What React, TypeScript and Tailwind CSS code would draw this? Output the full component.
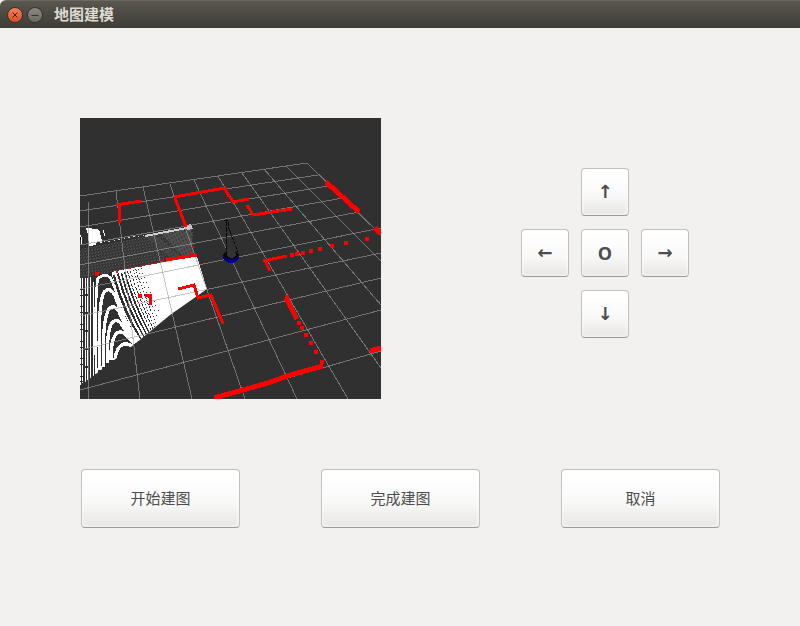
import type { ReactNode } from "react";

type Segment = [number, number, number, number];

const gridLines: Segment[] = [
  [0, 78, 227, 45],
  [0, 93, 238, 57],
  [0, 109, 248, 68],
  [0, 127, 263, 80],
  [0, 147, 279, 94],
  [0, 171, 301, 110],
  [0, 198, 301, 135],
  [0, 232, 301, 160],
  [0, 272, 301, 192],
  [135, 281, 301, 233],
  [8, 84, 8, 281],
  [36, 73, 60, 281],
  [63, 69, 112, 281],
  [90, 66, 165, 281],
  [114, 62, 217, 281],
  [138, 58, 268, 281],
  [162, 55, 301, 250],
  [184, 51, 301, 187],
  [206, 48, 301, 143],
  [227, 45, 301, 117],
];

const scanLines = [
  "M36 87 L61 83",
  "M39 87 L40 105",
  "M94 79 L145 70 L149 79",
  "M95 80 L106 109",
  "M150 79 L153 84 L169 81",
  "M167 87 L173 97 L212 91",
  "M183 143 L207 138",
  "M185 143 L190 153",
  "M98 171 L114 167 L118 180 L131 177 L143 206",
  "M65 177 L70 177 L70 187",
  "M86 142 L117 137",
];

const thickScanLines = [
  "M246 64 L279 94",
  "M295 110 L301 116",
  "M206 180 L217 201",
  "M134 280 L188 265 L210 257 L243 248",
  "M290 233 L301 230",
];

const scanPoints: [number, number][] = [
  [287, 121], [266, 125], [252, 128], [240, 131], [231, 133], [223, 135], [217, 136], [212, 137],
  [219, 205], [222, 210], [226, 217], [231, 225], [236, 234], [242, 244],
  [207, 179], [17, 156], [60, 178],
];

const wallPoints: [number, number][] = [
  [37, 154], [50, 150], [61, 148], [69, 146], [76, 145], [82, 143], [113, 129], [111, 134],
];

const arches = [
  "M49 476 C46 380 45 260 53 190 Q76 172 92 190 C118 245 142 325 184 380",
  "M60 464 C55 380 56 255 73 230 Q90 214 105 242 C125 295 150 350 174 378",
  "M71 455 C67 380 72 300 88 280 Q103 267 117 290 C135 330 155 362 172 382",
  "M83 444 C80 390 84 332 99 320 Q115 309 130 335 Q148 366 166 384",
  "M93 434 C91 395 99 362 113 353 Q130 345 145 368 L162 386",
  "M104 436 Q109 398 128 388 Q144 383 158 395",
];

const fanSolid = [
  "M98 180 L104 179 Q132 280 187 376 L184 378 Q124 290 98 180Z",
  "M111 176 L116 175 Q142 272 196 369 L193 371 Q135 278 111 176Z",
  "M122 174 L126 173 Q150 264 204 362 L201 364 Q145 270 122 174Z",
  "M132 171 L136 170 Q160 256 211 356 L208 358 Q155 262 132 171Z",
];

const fanDashed = [
  "M143 169 Q166 255 217 352",
  "M151 167 Q175 248 222 347",
  "M159 165 Q183 243 226 340",
  "M167 163 Q190 236 231 330",
  "M175 161 Q197 228 234 315",
  "M183 160 Q203 220 236 290",
];

function PointCloudView() {
  return (
    <svg
      role="img"
      aria-label="地图"
      viewBox="0 0 301 281"
      className="block w-[301px] shrink-0 bg-[#303030]"
      shapeRendering="crispEdges"
    >
      <defs>
        <pattern id="mesh" width="3" height="3" patternUnits="userSpaceOnUse" patternTransform="rotate(-10)">
          <rect width="1" height="1" fill="#666" />
          <rect x="1" y="2" width="1" height="1" fill="#505050" />
        </pattern>
        <pattern id="grain" width="3" height="4" patternUnits="userSpaceOnUse" patternTransform="rotate(-28)">
          <rect width="1" height="2" fill="#333" />
        </pattern>
        <clipPath id="floor">
          <path d="M0 160 L17 156 L117 138 L127 171 L90 197 L56 225 L33 243 L0 268Z" />
        </clipPath>
      </defs>

      <g clipPath="url(#floor)">
        <path d="M32 150 L117 138 L127 171 L60 225 Q42 190 32 157Z" fill="#fff" />
        <g transform="translate(0 97) scale(0.33333)" fill="none">
          <path d="M2 190 V510 M9 190 V505" stroke="#fff" strokeWidth="3" strokeDasharray="32 3 14 3" />
          <path d="M16 188 V500 M23 188 V495" stroke="#fff" strokeWidth="3" strokeDasharray="50 4" />
          <path d="M32 186 V492" stroke="#fff" strokeWidth="5" />
          <path d="M41 200 V484" stroke="#fff" strokeWidth="4" />
          {arches.map((d, i) => (
            <path key={d} d={d} stroke="#fff" strokeWidth={i === 0 ? 8 : 10} />
          ))}
          {fanSolid.map((d) => (
            <path key={d} d={d} fill="#303030" />
          ))}
          {fanDashed.map((d, i) => (
            <path
              key={d}
              d={d}
              stroke="#303030"
              strokeWidth="3"
              strokeDasharray={i < 2 ? "9 4" : i < 4 ? "4 6" : "3 12"}
            />
          ))}
        </g>
      </g>

      <path d="M0 131 L65 119 L112 109 L115 138 L0 160Z" fill="#343434" />
      <path d="M0 131 L65 119 L112 109 L115 138 L0 160Z" fill="url(#mesh)" />
      <path d="M82 116 L111 110 L114 137 L103 139Z" fill="#505050" />
      <path d="M66 119 L76 117 L101 139 L92 141Z" fill="#484848" />
      <path d="M66 119 L111 110 L114 137 L88 141Z" fill="url(#grain)" />
      <path d="M65 118 L112 109" stroke="#d0d0d0" strokeWidth="2" />
      <path d="M107 107 L111 106 L113 111 L107 112Z" fill="#c8c8c8" />
      <path d="M24 124 L65 117" stroke="#ddd" strokeDasharray="1 3 2 4" />
      <path d="M6 110 L17 111 L20 114 L22 125 L17 124 L16 127 L9 128 L8 117Z" fill="#fff" />
      <path d="M0 117 L1 119 V126 M23 112 L25 118 M21 121 L22 125" stroke="#fff" />

      <g stroke="#a0a0a0" strokeOpacity="0.6">
        {gridLines.map(([x1, y1, x2, y2]) => (
          <line key={`${x1}-${y1}-${x2}`} x1={x1} y1={y1} x2={x2} y2={y2} />
        ))}
      </g>

      <g stroke="#f00" fill="none" strokeWidth="3">
        {scanLines.map((d) => (
          <path key={d} d={d} />
        ))}
      </g>
      <g stroke="#f00" fill="none" strokeWidth="5">
        {thickScanLines.map((d) => (
          <path key={d} d={d} />
        ))}
      </g>
      <g fill="#f00">
        {scanPoints.map(([x, y]) => (
          <circle key={`${x}-${y}`} cx={x} cy={y} r="2.4" />
        ))}
        {wallPoints.map(([x, y]) => (
          <rect key={`${x}-${y}`} x={x - 1} y={y - 1} width="2" height="2" />
        ))}
      </g>

      <ellipse cx="151" cy="139" rx="8" ry="6" fill="#00008c" />
      <ellipse cx="151" cy="137" rx="8" ry="4" fill="#0a0a0a" />
      <path d="M147 131 H155 L156 138 L151 140 L147 138Z" fill="#333" />
      <path d="M146 103 V135" stroke="#080808" strokeDasharray="5 1" />
      <path d="M144 102 L148 103 L149 111 L158 134" stroke="#080808" fill="none" strokeDasharray="4 1" />
      <rect x="152" y="139" width="1" height="1" fill="#c00" />
    </svg>
  );
}

const surface =
  "rounded border border-[#c2c0bd] border-b-[#9c9a97] bg-linear-to-b from-white from-10% via-[#f9f9f9] via-55% to-[#e7e6e4] shadow-[inset_0_0_3px_1px_#ffffffb0] text-[#4c4c4c] active:brightness-95";

function PadButton({ label, place, children }: { label: string; place: string; children: ReactNode }) {
  return (
    <button
      type="button"
      aria-label={label}
      className={`flex size-12 items-center justify-center font-['DejaVu_Sans',sans-serif] text-lg font-bold ${surface} ${place}`}
    >
      {children}
    </button>
  );
}

function ActionButton({ children }: { children: ReactNode }) {
  return (
    <button type="button" className={`h-[59px] w-[159px] text-[15px] ${surface}`}>
      {children}
    </button>
  );
}

export default function App() {
  return (
    <div className="min-h-screen bg-[#f2f1f0] font-['Noto_Sans_CJK_SC',sans-serif]">
      <header className="flex h-7 items-center rounded-tl-md border-t border-[#69675f] bg-linear-to-b from-[#59574f] to-[#3d3c37] pl-[7px]">
        <button type="button" aria-label="关闭" className="size-4 rounded-full border border-[#35332e] bg-linear-to-b from-[#f4815a] to-[#df4b1a]">
          <svg viewBox="0 0 14 14" className="block" stroke="#4a2015" strokeWidth="1">
            <path d="M4.5 4.5 L9.5 9.5 M9.5 4.5 L4.5 9.5" />
          </svg>
        </button>
        <button type="button" aria-label="最小化" className="ml-1 size-4 rounded-full border border-[#35332e] bg-linear-to-b from-[#8b8982] to-[#6b6963]">
          <svg viewBox="0 0 14 14" className="block" stroke="#33322e" strokeWidth="1">
            <path d="M3.5 7.5 H10.5" />
          </svg>
        </button>
        <h1 className="ml-[11px] text-[15px] font-bold text-[#dfdbd2]">地图建模</h1>
      </header>

      <main className="px-20 pt-[90px]">
        <div className="flex items-start justify-between">
          <PointCloudView />
          <div className="mt-[50px] mr-[31px] grid grid-cols-3 gap-x-3 gap-y-[13px]">
            <PadButton label="前进" place="col-start-2">↑</PadButton>
            <PadButton label="左转" place="col-start-1 row-start-2">←</PadButton>
            <PadButton label="停止" place="col-start-2 row-start-2">
              <span className="font-['Open_Sans',sans-serif]">O</span>
            </PadButton>
            <PadButton label="右转" place="col-start-3 row-start-2">→</PadButton>
            <PadButton label="后退" place="col-start-2 row-start-3">↓</PadButton>
          </div>
        </div>
        <div className="mt-[70px] flex justify-between pl-px">
          <ActionButton>开始建图</ActionButton>
          <ActionButton>完成建图</ActionButton>
          <ActionButton>取消</ActionButton>
        </div>
      </main>
    </div>
  );
}
